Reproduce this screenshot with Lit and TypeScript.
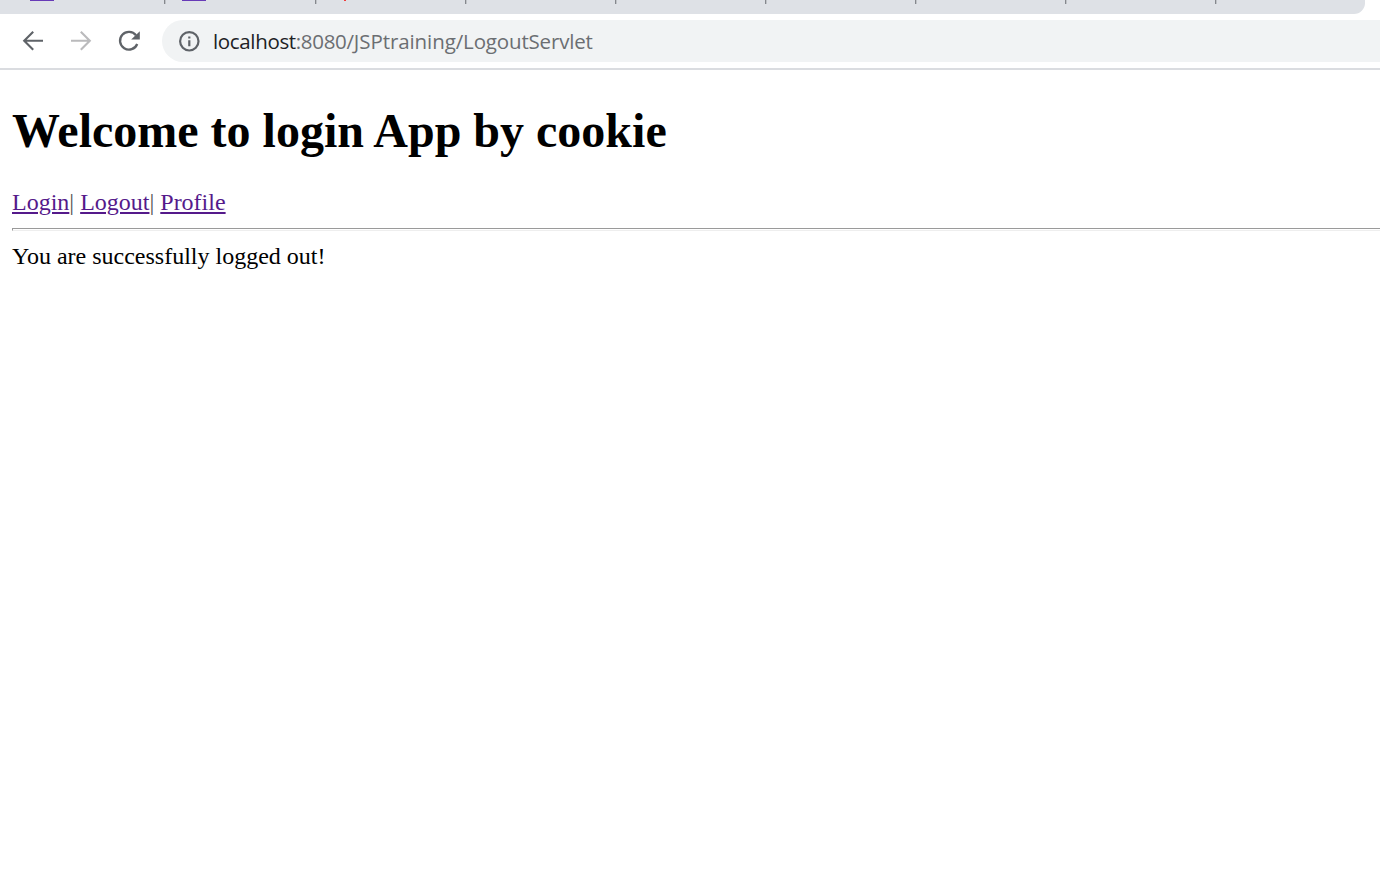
import { LitElement, html, css } from "lit";
import { customElement } from "lit/decorators.js";

@customElement("browser-tabs")
class BrowserTabs extends LitElement {
  static styles = css`
    :host { display: flex; box-sizing: border-box; width: 1365px; height: 14px; background: #dee1e6; border-bottom-right-radius: 11px; overflow: hidden; }
    .tab { box-sizing: border-box; flex: none; width: 150px; height: 4px; border-right: 1px solid #85888d; box-shadow: 1px 0 #bfc2c7, 0 1px #d0d3d8; clip-path: inset(0 -1px 0 0); }
    .first { width: 165px; padding-left: 30px; }
    .second { width: 151px; padding-left: 17px; }
    .third { padding-left: 28px; }
    .icon { height: 1px; width: 24px; background: #673ab7; }
    .red { height: 1px; width: 2px; background: #f03a3a; }
  `;
  render() {
    return html`
      <div class="tab first"><div class="icon"></div></div>
      <div class="tab second"><div class="icon"></div></div>
      <div class="tab third"><div class="red"></div></div>
      ${[1, 2, 3, 4, 5].map(() => html`<div class="tab"></div>`)}
    `;
  }
}

@customElement("browser-toolbar")
class BrowserToolbar extends LitElement {
  static styles = css`
    :host { display: flex; box-sizing: border-box; height: 56px; padding-top: 6px; border-bottom: 2px solid #dadce0; background: #fff; }
    .buttons { display: flex; flex: none; width: 162px; height: 42px; }
    svg { display: block; flex: none; }
    .address { display: flex; flex: 1; height: 42px; border-radius: 21px 0 0 21px; background: #f1f3f4; }
    .url { font: 20.5px/42px "Open Sans", "Noto Sans", sans-serif; letter-spacing: -0.34px; color: #6b6e72; white-space: nowrap; padding-left: 1px; }
    .host { color: #202124; }
    .path { letter-spacing: -0.08px; }
    .page { letter-spacing: -0.16px; }
  `;
  render() {
    return html`
      <div class="buttons">
        <svg width="162" height="42" viewBox="0 20 162 42" fill="none" stroke="#5f6368" stroke-width="2.1">
          <path d="M43 40.7H24.5M33.2 31.7L24.2 40.7L33.2 49.7" />
          <path stroke="#bababc" d="M71 40.7H89.5M80.8 31.7L89.8 40.7L80.8 49.7" />
          <path stroke-width="2.3" d="M136 35.3A8.9 8.9 0 1 0 137.2 44" />
          <path fill="#5f6368" stroke="none" d="M139.8 31.2V39.6H131.2Z" />
        </svg>
      </div>
      <div class="address">
        <svg width="50" height="42" viewBox="162 20 50 42">
          <circle cx="189.3" cy="41.3" r="9.2" fill="none" stroke="#5f6368" stroke-width="2.2" />
          <path fill="#5f6368" d="M188.2 36.4h2.2v2.2h-2.2zM188.2 40.3h2.2v6h-2.2z" />
        </svg>
        <div class="url"><span class="host">localhost</span>:8080<span class="path">/JSPtraining</span><span class="page">/LogoutServlet</span></div>
      </div>
    `;
  }
}

@customElement("app-root")
class AppRoot extends LitElement {
  static styles = css`
    :host { display: flex; flex-direction: column; height: 873px; overflow: hidden; background: #fff; color: #000; font: 24px/27px "Liberation Serif", "Times New Roman", serif; }
    main { padding: 34px 0 0 12px; }
    h1 { margin: 0 0 31px; font-size: 48px; line-height: 54px; font-weight: 700; white-space: nowrap; }
    nav { color: #555; }
    a { color: #551a8b; text-decoration: underline; text-decoration-thickness: 2px; text-underline-offset: 2px; }
    .rule { height: 1px; border: solid #9a9a9a; border-width: 1px 0 0 1px; border-bottom: 1px solid #eee; margin: 12px 0; }
  `;
  render() {
    return html`
      <browser-tabs></browser-tabs>
      <browser-toolbar></browser-toolbar>
      <main>
        <h1>Welcome to login App by cookie</h1>
        <nav><a href="#">Login</a>| <a href="#">Logout</a>| <a href="#">Profile</a></nav>
        <div class="rule"></div>
        <div>You are successfully logged out!</div>
      </main>
    `;
  }
}
